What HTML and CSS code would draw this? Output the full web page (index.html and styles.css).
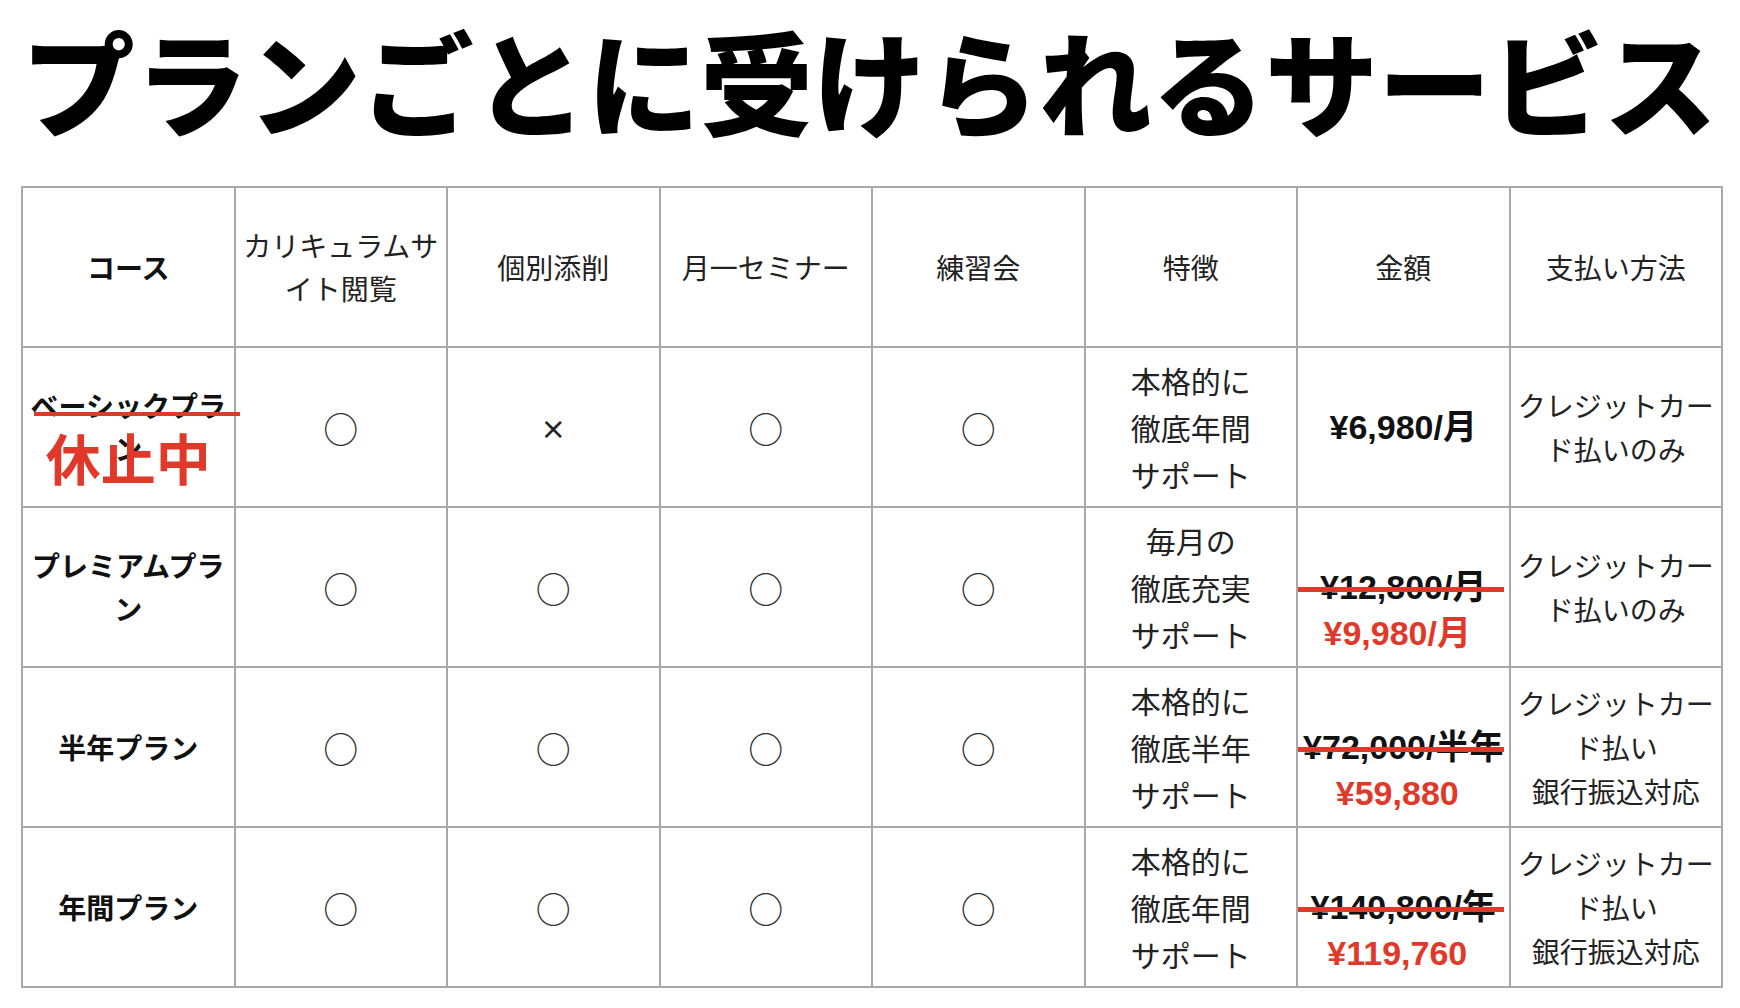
FILE: index.html
```html
<!DOCTYPE html>
<html lang="ja">
<head>
<meta charset="utf-8">
<title>プランごとに受けられるサービス</title>
<link rel="stylesheet" href="styles.css">
</head>
<body>
<div class="page">
  <h1 class="title">プランごとに受けられるサービス</h1>
  <table class="plans">
    <colgroup>
      <col><col><col><col><col><col><col><col>
    </colgroup>
    <thead>
      <tr>
        <th class="course">コース</th>
        <th>カリキュラムサイト閲覧</th>
        <th>個別添削</th>
        <th>月一セミナー</th>
        <th>練習会</th>
        <th>特徴</th>
        <th>金額</th>
        <th>支払い方法</th>
      </tr>
    </thead>
    <tbody>
      <tr>
        <td class="course suspended">ベーシックプラン<span class="suspend-label">休止中</span></td>
        <td class="mark">○</td>
        <td class="mark cross">×</td>
        <td class="mark">○</td>
        <td class="mark">○</td>
        <td class="feature">本格的に<br>徹底年間<br>サポート</td>
        <td class="price">¥6,980/月</td>
        <td class="pay">クレジットカード払いのみ</td>
      </tr>
      <tr>
        <td class="course">プレミアムプラン</td>
        <td class="mark">○</td>
        <td class="mark">○</td>
        <td class="mark">○</td>
        <td class="mark">○</td>
        <td class="feature">毎月の<br>徹底充実<br>サポート</td>
        <td class="price sale"><span class="old">¥12,800/月</span><span class="new">¥9,980/月</span></td>
        <td class="pay">クレジットカード払いのみ</td>
      </tr>
      <tr>
        <td class="course">半年プラン</td>
        <td class="mark">○</td>
        <td class="mark">○</td>
        <td class="mark">○</td>
        <td class="mark">○</td>
        <td class="feature">本格的に<br>徹底半年<br>サポート</td>
        <td class="price sale"><span class="old">¥72,000/半年</span><span class="new">¥59,880</span></td>
        <td class="pay">クレジットカード払い<br>銀行振込対応</td>
      </tr>
      <tr>
        <td class="course">年間プラン</td>
        <td class="mark">○</td>
        <td class="mark">○</td>
        <td class="mark">○</td>
        <td class="mark">○</td>
        <td class="feature">本格的に<br>徹底年間<br>サポート</td>
        <td class="price sale"><span class="old">¥140,800/年</span><span class="new">¥119,760</span></td>
        <td class="pay">クレジットカード払い<br>銀行振込対応</td>
      </tr>
    </tbody>
  </table>
</div>
</body>
</html>
```

FILE: styles.css
```css
* {
  box-sizing: border-box;
}

body {
  margin: 0;
  background: #ffffff;
  font-family: "Noto Sans CJK JP", "Noto Sans", sans-serif;
  color: #222222;
}

.page {
  padding: 11px 0 0 21px;
}

.title {
  margin: 0 0 39px 1px;
  font-size: 113px;
  line-height: 136px;
  font-weight: 900;
  color: #000000;
  white-space: nowrap;
}

.plans {
  border-collapse: collapse;
  table-layout: fixed;
  width: 1702px;
}

.plans th,
.plans td {
  border: 2px solid #a8a8a8;
  height: 160px;
  padding: 0 4px;
  text-align: center;
  vertical-align: middle;
  font-size: 28px;
  line-height: 43px;
  font-weight: 400;
}

.plans .course {
  font-weight: 700;
  color: #111111;
}

.plans .suspended {
  position: relative;
}

.plans .suspended::before {
  content: "";
  position: absolute;
  left: 11px;
  top: 64px;
  width: 206px;
  height: 4px;
  background: #e0392a;
}

.suspend-label {
  position: absolute;
  left: 50%;
  top: 81px;
  transform: translateX(-50%);
  font-size: 55px;
  line-height: 55px;
  font-weight: 700;
  color: #e0392a;
  white-space: nowrap;
}

.plans .mark {
  font-size: 35px;
  color: #333333;
}

.plans .mark.cross {
  font-size: 26px;
  font-weight: 700;
  color: #222222;
}

.plans .feature {
  font-size: 30px;
  line-height: 47px;
}

.plans .pay {
  line-height: 44px;
}

.plans .price {
  font-family: "Liberation Sans", "Noto Sans CJK JP", sans-serif;
  font-size: 34px;
  font-weight: 700;
  color: #111111;
}

.plans .price.sale {
  position: relative;
  line-height: 46px;
  padding-top: 46px;
}

.plans .price.sale::after {
  content: "";
  position: absolute;
  left: 0;
  top: 79px;
  width: 206px;
  height: 5px;
  background: #e0392a;
}

.old,
.new {
  display: block;
  white-space: nowrap;
}

.new {
  color: #e0392a;
  padding-right: 12px;
}
```
